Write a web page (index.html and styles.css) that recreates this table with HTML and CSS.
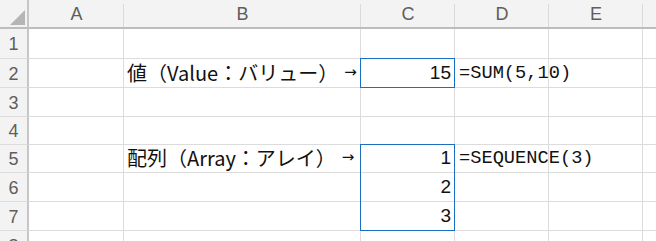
FILE: index.html
```html
<!DOCTYPE html>
<html lang="ja">
<head>
<meta charset="utf-8">
<link rel="stylesheet" href="styles.css">
</head>
<body>
<div class="sheet">
  <div class="corner"><span class="tri"></span></div>
  <div class="colh">A</div>
  <div class="colh">B</div>
  <div class="colh">C</div>
  <div class="colh">D</div>
  <div class="colh">E</div>
  <div class="colh last"></div>

  <div class="rowh">1</div><div class="cell"></div><div class="cell"></div><div class="cell"></div><div class="cell"></div><div class="cell"></div><div class="cell last"></div>
  <div class="rowh">2</div><div class="cell"></div><div class="cell label">値（Value：バリュー）<span class="arrow">→</span></div><div class="cell num sel-one">15</div><div class="cell formula">=SUM(5,10)</div><div class="cell"></div><div class="cell last"></div>
  <div class="rowh">3</div><div class="cell"></div><div class="cell"></div><div class="cell"></div><div class="cell"></div><div class="cell"></div><div class="cell last"></div>
  <div class="rowh">4</div><div class="cell"></div><div class="cell"></div><div class="cell"></div><div class="cell"></div><div class="cell"></div><div class="cell last"></div>
  <div class="rowh">5</div><div class="cell"></div><div class="cell label">配列（Array：アレイ）<span class="arrow">→</span></div><div class="cell num spill-top">1</div><div class="cell formula">=SEQUENCE(3)</div><div class="cell"></div><div class="cell last"></div>
  <div class="rowh">6</div><div class="cell"></div><div class="cell"></div><div class="cell num spill-mid">2</div><div class="cell"></div><div class="cell"></div><div class="cell last"></div>
  <div class="rowh">7</div><div class="cell"></div><div class="cell"></div><div class="cell num spill-bot">3</div><div class="cell"></div><div class="cell"></div><div class="cell last"></div>
  <div class="rowh">8</div><div class="cell"></div><div class="cell"></div><div class="cell"></div><div class="cell"></div><div class="cell"></div><div class="cell last"></div>
</div>
</body>
</html>
```
FILE: styles.css
```css
html, body {
  margin: 0;
  padding: 0;
  background: #ffffff;
  overflow: hidden;
}
.sheet {
  display: grid;
  grid-template-columns: 29px 95px 237px 94px 94px 94px 40px;
  grid-template-rows: 29px 30px 29px 29px 28px 28px 29px 29px 29px;
  width: 656px;
  height: 241px;
  overflow: hidden;
  font-family: "Liberation Sans", Arial, sans-serif;
}
.corner {
  background: #f3f3f3;
  border-right: 2px solid #c6c6c6;
  border-bottom: 2px solid #bdbdbd;
  position: relative;
}
.tri {
  position: absolute;
  right: 2px;
  bottom: 2px;
  width: 0;
  height: 0;
  border-left: 15px solid transparent;
  border-bottom: 15px solid #b5b5b5;
}
.colh {
  background: #f3f3f3;
  border-bottom: 2px solid #bdbdbd;
  color: #5e5e5e;
  font-size: 18px;
  display: flex;
  align-items: center;
  justify-content: center;
  padding-top: 2px;
  background-image: linear-gradient(#dadada, #dadada);
  background-size: 1px calc(100% - 4px);
  background-position: right bottom;
  background-repeat: no-repeat;
}
.colh.last { background-image: none; }
.rowh {
  background: #f3f3f3;
  border-right: 2px solid #c6c6c6;
  border-bottom: 1px solid #dcdcdc;
  color: #5e5e5e;
  font-size: 18px;
  display: flex;
  align-items: center;
  justify-content: center;
  padding-top: 2px;
}
.cell {
  position: relative;
  border-right: 1px solid #dcdcdc;
  border-bottom: 1px solid #dcdcdc;
  display: flex;
  align-items: flex-end;
  padding: 0 3px 3px 3px;
  white-space: nowrap;
  color: #111;
  min-width: 0;
}
.label {
  font-family: "Noto Sans CJK JP", sans-serif;
  font-size: 20px;
  line-height: 24px;
  padding-bottom: 2px;
}
.arrow {
  font-family: "DejaVu Sans", sans-serif;
  font-size: 15px;
  margin-left: 6px;
  line-height: 25px;
}
.num {
  justify-content: flex-end;
  font-size: 19px;
  line-height: 22px;
  padding-right: 3px;
}
.formula {
  font-family: "Liberation Mono", monospace;
  font-size: 18.7px;
  line-height: 22px;
  padding-left: 4px;
  z-index: 2;
}
.sel-one::after,
.spill-top::after,
.spill-mid::after,
.spill-bot::after {
  content: "";
  position: absolute;
  top: -1px;
  left: -1px;
  right: -1px;
  bottom: -1px;
  border: 0 solid #1b6ec2;
  border-left-width: 1px;
  border-right-width: 1px;
  z-index: 1;
  pointer-events: none;
}
.sel-one::after { border-top-width: 1px; border-bottom-width: 1px; }
.spill-top::after { border-top-width: 1px; }
.spill-bot::after { border-bottom-width: 1px; }
```
